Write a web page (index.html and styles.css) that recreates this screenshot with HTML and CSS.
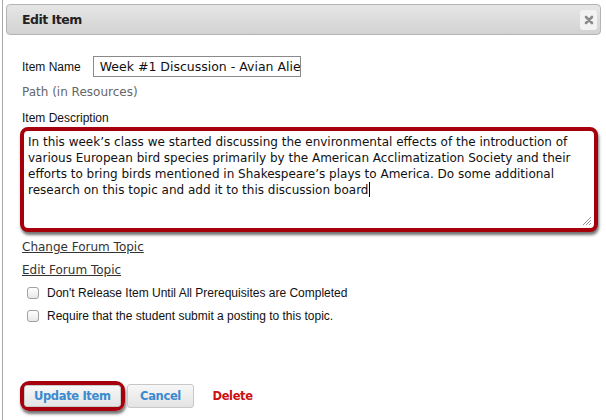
FILE: index.html
```html
<!DOCTYPE html>
<html>
<head>
<meta charset="utf-8">
<link rel="stylesheet" href="styles.css">
</head>
<body>
<div class="dialog">
  <div class="titlebar">
    <span class="title">Edit Item</span>
    <span class="close"><svg width="10" height="10" viewBox="0 0 10 10"><path d="M2 2 L8 8 M8 2 L2 8" stroke="#8a8a8a" stroke-width="2.6" stroke-linecap="round"/></svg></span>
  </div>
  <div class="content">
    <div class="row-name">
      <span class="lbl">Item Name</span>
      <div class="input">Week #1 Discussion - Avian Alie</div>
    </div>
    <div class="path">Path (in Resources)</div>
    <div class="lbl desc-lbl">Item Description</div>
    <div class="highlight ta-wrap">
      <div class="textarea">In this week’s class we started discussing the environmental effects of the introduction of various European bird species primarily by the American Acclimatization Society and their efforts to bring birds mentioned in Shakespeare’s plays to America. Do some additional research on this topic and add it to this discussion board<span class="caret"></span>
        <svg class="grip" width="10" height="10" viewBox="0 0 10 10"><path d="M1 9 L9 1 M4 9 L9 4 M7 9 L9 7" stroke="#999" stroke-width="1"/></svg>
      </div>
    </div>
    <a class="link link1">Change Forum Topic</a>
    <a class="link link2">Edit Forum Topic</a>
    <label class="check c1"><span class="box"></span>Don't Release Item Until All Prerequisites are Completed</label>
    <label class="check c2"><span class="box"></span>Require that the student submit a posting to this topic.</label>
    <div class="buttons">
      <div class="highlight btn-wrap"><span class="btn">Update Item</span></div>
      <span class="btn cancel">Cancel</span>
      <span class="delete">Delete</span>
    </div>
  </div>
</div>
</body>
</html>
```
FILE: styles.css
```css
html, body {
  margin: 0;
  padding: 0;
  background: #fff;
}
.dialog {
  margin-left: 2px;
  border-left: 1px solid #a8a8a8;
  height: 420px;
  box-sizing: border-box;
  padding-top: 4px;
}
.titlebar {
  margin: 0 5px 0 3px;
  height: 31px;
  box-sizing: border-box;
  border: 1px solid #b4b4b4;
  border-radius: 4px;
  background: linear-gradient(#e6e6e6, #d2d2d2);
  display: flex;
  align-items: center;
  justify-content: space-between;
  padding: 0 3px 0 15px;
}
.title {
  font-family: "DejaVu Sans", Verdana, sans-serif;
  font-weight: bold;
  font-size: 12.5px;
  letter-spacing: -0.5px;
  color: #222;
}
.close {
  width: 17px;
  height: 20px;
  border-radius: 3px;
  background: #f2f2f2;
  display: flex;
  align-items: center;
  justify-content: center;
}
.content {
  padding-left: 19px;
  position: relative;
}
.lbl {
  font-family: "Liberation Sans", Arial, sans-serif;
  font-size: 12px;
  color: #111;
}
.row-name {
  display: flex;
  align-items: center;
  margin-top: 21px;
  height: 21px;
}
.input {
  margin-left: 12px;
  width: 208px;
  height: 21px;
  box-sizing: border-box;
  border: 1px solid #8a8a8a;
  font-family: "DejaVu Sans", Verdana, sans-serif;
  font-size: 12.5px;
  line-height: 19px;
  padding-left: 6px;
  color: #111;
  white-space: nowrap;
  overflow: hidden;
}
.path {
  margin-top: 7px;
  font-family: "DejaVu Sans", Verdana, sans-serif;
  font-size: 12px;
  color: #666;
  line-height: 16px;
}
.desc-lbl {
  display: block;
  margin-top: 10px;
  line-height: 16px;
}
.highlight {
  border: 4px solid #a6000d;
  border-radius: 8px;
  box-shadow: 1px 3px 3px rgba(0, 0, 0, 0.55);
}
.ta-wrap {
  margin-top: 1px;
  margin-left: -2px;
  width: 570px;
  height: 97px;
  background: #fff;
}
.textarea {
  position: relative;
  height: 100%;
  box-sizing: border-box;
  padding: 3px 4px 0 4px;
  font-family: "DejaVu Sans", Verdana, sans-serif;
  font-size: 12px;
  line-height: 16px;
  color: #111;
}
.caret {
  display: inline-block;
  width: 1px;
  height: 15px;
  background: #000;
  vertical-align: -3px;
}
.grip {
  position: absolute;
  right: 2px;
  bottom: 2px;
}
.link {
  display: block;
  font-family: "DejaVu Sans", Verdana, sans-serif;
  font-size: 12px;
  color: #333;
  text-decoration: underline;
  line-height: 16px;
}
.link1 { margin-top: 7px; }
.link2 { margin-top: 7px; }
.check {
  display: flex;
  align-items: center;
  font-family: "Liberation Sans", Arial, sans-serif;
  font-size: 12px;
  color: #111;
  line-height: 16px;
  margin-left: 5px;
}
.c1 { margin-top: 7px; }
.c2 { margin-top: 7px; }
.box {
  width: 10px;
  height: 10px;
  border: 1px solid #a0a0a0;
  border-radius: 3px;
  background: linear-gradient(#fff, #e8e8e8);
  margin-right: 8px;
}
.buttons {
  display: flex;
  align-items: center;
  margin-top: 57px;
  margin-left: -2px;
}
.btn-wrap {
  border-radius: 9px;
  padding: 0;
}
.btn {
  display: inline-block;
  height: 22px;
  box-sizing: border-box;
  line-height: 20px;
  padding: 0 6px;
  border: 1px solid #c8c8c8;
  border-radius: 3px;
  background: linear-gradient(#f7f7f7, #e4e4e4);
  font-family: "DejaVu Sans", Verdana, sans-serif;
  font-weight: bold;
  font-size: 11.5px;
  letter-spacing: -0.35px;
  color: #3a8ad0;
}
.btn-wrap .btn {
  display: block;
  padding: 0 9px;
}
.cancel {
  margin-left: 2px;
  height: 24px;
  line-height: 22px;
  padding: 0 12.5px;
}
.delete {
  margin-left: 18px;
  font-family: "DejaVu Sans", Verdana, sans-serif;
  font-weight: bold;
  font-size: 11.5px;
  letter-spacing: -0.35px;
  color: #cc1010;
}
```
